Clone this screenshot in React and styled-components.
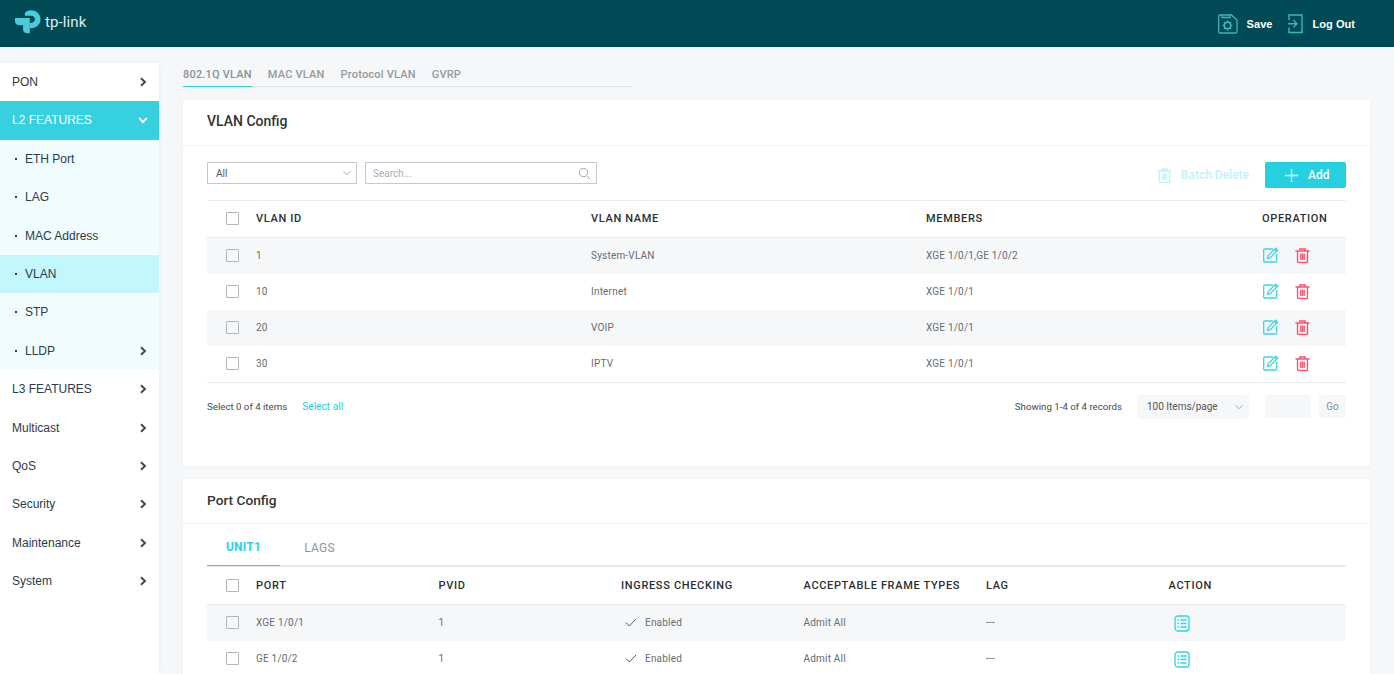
import React from "react";
import styled, { createGlobalStyle } from "styled-components";

const Global = createGlobalStyle`
  html, body { margin: 0; padding: 0; height: 100%; overflow: hidden; background: #f6f7f9; }
  #root { height: 674px; overflow: hidden; }
  * { box-sizing: border-box; }
`;
const ARIAL = `"Liberation Sans", Arial, sans-serif`;
const ROBOTO = `Roboto, "Liberation Sans", sans-serif`;

const Page = styled.div`display:flex;flex-direction:column;height:674px;overflow:hidden;background:#f6f7f9;font-family:${ROBOTO};`;
const TopBar = styled.header`height:47px;flex:none;background:#004a56;display:flex;align-items:center;justify-content:space-between;padding:0 39px 0 15px;`;
const Logo = styled.div`display:flex;align-items:center;gap:4px;margin-top:-3px;`;
const LogoText = styled.span`font:400 15px ${ROBOTO};color:#dcefF1;letter-spacing:.1px;margin-top:-1px;`;
const TopActions = styled.div`display:flex;align-items:center;`;
const TopAction = styled.div`display:flex;align-items:center;gap:9px;margin-left:${p=>p.$ml||0}px;font:700 11px ${ARIAL};letter-spacing:.05px;color:#fff;`;
const Body = styled.div`display:flex;flex:1;min-height:0;padding-top:16px;`;
const Side = styled.nav`width:159px;flex:none;background:#fff;margin-top:-.1px;box-shadow:0 0 6px rgba(0,0,0,.04);`;
const NavRow = styled.div`height:38.4px;display:flex;align-items:center;justify-content:space-between;padding:0 12px;font:400 12px ${ARIAL};color:#2c3a4a;background:${p=>p.$bg||"transparent"};${p=>p.$active&&"color:#fff;"}`;
const SubList = styled.div`background:#f1fcfe;`;
const SubLabel = styled.span`display:flex;align-items:center;gap:8px;`;
const Dot = styled.i`width:2px;height:2px;background:#2c3a4a;display:block;margin-left:3px;`;
const Main = styled.main`flex:1;min-width:0;padding:0 24px;`;
const TopTabs = styled.div`display:flex;width:450px;height:24px;border-bottom:1px solid #e3e5e8;gap:16px;`;
const TopTab = styled.div`height:24px;font:500 11px ${ROBOTO};letter-spacing:.2px;line-height:24px;color:${p=>p.$on?"#8a9299":"#949aa0"};${p=>p.$on&&"border-bottom:1px solid #32cfdf;"}`;
const Card = styled.section`background:#fff;margin-top:${p=>p.$mt}px;height:${p=>p.$h||"auto"};box-shadow:0 1px 3px rgba(0,0,0,.03);padding:0 24px;`;
const CardHead = styled.div`height:${p=>p.$h||46}px;margin:0 -24px;padding:0 24px 3px;border-bottom:1px solid #f2f3f4;display:flex;align-items:center;font:500 ${p=>p.$fs||14}px ${ROBOTO};color:#333;`;
const Toolbar = styled.div`display:flex;align-items:flex-start;padding-top:16px;height:54px;gap:8px;`;
const Select = styled.div`width:150px;height:22px;border:1px solid #c6c8ca;display:flex;align-items:center;justify-content:space-between;padding:0 2px 0 8px;font:400 10px ${ROBOTO};color:#555;`;
const Search = styled.div`width:232px;height:22px;border:1px solid #c6c8ca;display:flex;align-items:center;justify-content:space-between;padding:0 5px 0 7px;font:400 10px ${ROBOTO};color:#a9adb1;`;
const Spacer = styled.div`flex:1;`;
const Batch = styled.div`display:flex;align-items:center;gap:9px;height:26px;margin-right:8px;font:500 12px ${ROBOTO};color:#c3f1f6;`;
const AddBtn = styled.div`width:81px;height:26px;background:#25d0e1;border-radius:2px;display:flex;align-items:center;padding-left:20px;gap:10px;font:500 12px ${ROBOTO};color:#fff;`;
const Row = styled.div`display:grid;grid-template-columns:${p=>p.$cols};align-items:center;height:${p=>p.$h||36}px;padding-bottom:${p=>p.$pb??2}px;background:${p=>p.$alt?"#f6f7f9":"#fff"};font:400 10px ${ROBOTO};color:#666c72;letter-spacing:.2px;`;
const HeadRow = styled(Row)`font:500 11px ${ROBOTO};color:#2b2f33;letter-spacing:.66px;border-top:${p=>p.$top?"1px solid #eceef0":"0"};border-bottom:1px solid #e8eaec;`;
const Box = styled.span`width:13px;height:13px;border:1px solid #b3b6b9;border-radius:1px;background:#fff;margin-left:19px;display:block;${p=>p.$alt&&"background:#f6f7f9;"}`;
const Ops = styled.div`display:flex;align-items:center;gap:16px;padding-left:${p=>p.$pl||1}px;padding-top:${p=>p.$pt||0}px;`;
const Footer = styled.div`border-top:1px solid #e8eaec;height:48px;display:flex;align-items:center;font:400 9.7px ${ROBOTO};color:#444a50;`;
const Link = styled.span`color:#25cfe0;margin-left:15px;font-size:10.2px;`;
const PageSel = styled.div`width:112px;height:24px;background:#f6f7f9;border-radius:2px;margin-left:15px;padding:0 3px 0 10px;display:flex;align-items:center;justify-content:space-between;font:400 10px ${ROBOTO};color:#555;`;
const GoInput = styled.div`width:46px;height:23px;background:#f6f7f9;border-radius:2px;margin-left:16px;`;
const GoBtn = styled.div`width:27px;height:23px;background:#f6f7f9;border-radius:2px;margin-left:8px;display:flex;align-items:center;justify-content:center;font:400 10px ${ROBOTO};color:#8b9096;`;
const UnitTabs = styled.div`display:flex;height:43px;border-bottom:2px solid #e8e9eb;`;
const UnitTab = styled.div`width:${p=>p.$w}px;height:42px;display:flex;align-items:center;justify-content:center;padding-top:5px;font:${p=>p.$on?"700":"400"} 12px ${ROBOTO};letter-spacing:.2px;color:${p=>p.$on?"#32cfdf":"#8f9499"};${p=>p.$on&&"border-bottom:1px solid #32cfdf;"}`;
const Enabled = styled.span`display:flex;align-items:center;gap:8px;padding-left:4px;`;
const Col = styled.span`display:block;`;

const Chevron = ({dir="right",color="#3c4650"}) => (
  <svg width="10" height="10" viewBox="0 0 10 10" fill="none" style={{marginRight:-1}}>
    <path d={dir==="right"?"M3 1.200 7 5 3 8.800":"M1.200 3 5 7l3.800-4"} stroke={color} strokeWidth="1.900"/>
  </svg>
);
const Thin = () => <svg width="14" height="8" viewBox="0 0 14 8" fill="none"><path d="M3.500 2.200 7 5.800l3.500-3.600" stroke="#a8abae"/></svg>;
const TpLogo = () => (
  <svg width="26" height="26" viewBox="0 0 29 27">
    <path d="M11 3.500C12.500 1.500 15 .5 18 .5c6 0 10.500 4.500 10.500 10s-4.500 10-10.500 10h-1.500v-6H18c2.300 0 4.200-1.800 4.200-4s-1.900-4-4.200-4h-7z" fill="#4acbd6"/>
    <path d="M9 9h7.500v17H13c-2 0-4-1.500-4-4v-5H4c-2 0-4-2-4-4V9z" fill="#4acbd6"/>
  </svg>
);
const SaveIcon = () => (
  <svg width="20" height="20" viewBox="0 0 20 20" fill="none" stroke="#3fb3c0" strokeWidth="1.300">
    <path d="M1.700 1h11.800l5.500 5v11.500a1.500 1.500 0 0 1-1.500 1.500H2.200A1.500 1.500 0 0 1 .7 17.500V2A1 1 0 0 1 1.700 1z"/>
    <path d="M4 1v2.500h8V1"/>
    <circle cx="9.500" cy="11.500" r="3.200" strokeWidth="1.500"/>
    <path d="M9.500 6.500v1.800M9.500 14.700v1.800M4.500 11.500h1.800M12.700 11.500h1.800M6 8l1.200 1.200M11.800 13.800 13 15M13 8l-1.200 1.200M7.200 13.800 6 15" strokeWidth="1.500"/>
  </svg>
);
const LogoutIcon = () => (
  <svg width="15" height="20" viewBox="0 0 15 20" fill="none" stroke="#3fb3c0" strokeWidth="1.400">
    <path d="M1 6V1h13v17.500H1v-5"/>
    <path d="M0 9.700h8.500M5.500 6.200 9 9.700l-3.500 3.500"/>
  </svg>
);
const SearchIcon = () => <svg width="13" height="13" viewBox="0 0 13 13" fill="none" stroke="#a4a8ac"><circle cx="5.500" cy="5.500" r="4.200"/><path d="m8.700 8.700 3.300 3.300"/></svg>;
const Trash = ({color,size=15}) => (
  <svg width={size} height={size} viewBox="0 0 15 15" fill="none" stroke={color} strokeWidth="1.300">
    <path d="M.5 3h14M4.800 3V1h5.400v2M2.500 3v10.500a1 1 0 0 0 1 1h8a1 1 0 0 0 1-1V3M5.800 5.500v6.500M7.500 5.500v6.500M9.200 5.500v6.500"/>
  </svg>
);
const Edit = () => (
  <svg width="16" height="16" viewBox="0 0 16 16" fill="none" stroke="#3fd3e3" strokeWidth="1.300">
    <path d="M10 2H1.700a1 1 0 0 0-1 1v11a1 1 0 0 0 1 1h11a1 1 0 0 0 1-1V7"/>
    <path d="M4.500 11.500 5.200 8.600 12.600 1.200l2 2-7.400 7.400z" />
    <path d="M11.500 2.300l2 2" />
  </svg>
);
const ListIcon = () => (
  <svg width="16" height="17" viewBox="0 0 16 17" fill="none" stroke="#35d0e2" strokeWidth="1.300">
    <rect x="1" y="1" width="14" height="15" rx="3"/>
    <path d="M3.500 5h1.500M6.500 5h6M3.500 8.500h1.500M6.500 8.500h6M3.500 12h1.500M6.500 12h6"/>
  </svg>
);
const Plus = () => <svg width="13" height="13" viewBox="0 0 13 13" stroke="#fff" strokeWidth="1.300"><path d="M6.500 0v13M0 6.500h13"/></svg>;
const Check = () => <svg width="12" height="9" viewBox="0 0 12 9" fill="none" stroke="#555c63"><path d="M1 4.500 4.300 8 11 1"/></svg>;

const vlanCols = "49px 335px 335px 336px 1fr";
const portCols = "49px 182.500px 182.500px 182.500px 182.500px 182.500px 1fr";
const vlans = [["1","System-VLAN","XGE 1/0/1,GE 1/0/2"],["10","Internet","XGE 1/0/1"],["20","VOIP","XGE 1/0/1"],["30","IPTV","XGE 1/0/1"]];
const ports = ["XGE 1/0/1","GE 1/0/2"];

export default function App() {
  return (
    <Page>
      <Global />
      <TopBar>
        <Logo><TpLogo /><LogoText>tp-link</LogoText></Logo>
        <TopActions>
          <TopAction><SaveIcon />Save</TopAction>
          <TopAction $ml={16}><LogoutIcon />Log Out</TopAction>
        </TopActions>
      </TopBar>
      <Body>
        <Side>
          <NavRow>PON<Chevron /></NavRow>
          <NavRow $active $bg="#36d0df">L2 FEATURES<Chevron dir="down" color="#fff" /></NavRow>
          <SubList>
            <NavRow><SubLabel><Dot />ETH Port</SubLabel></NavRow>
            <NavRow><SubLabel><Dot />LAG</SubLabel></NavRow>
            <NavRow><SubLabel><Dot />MAC Address</SubLabel></NavRow>
            <NavRow $bg="#c1f7fd"><SubLabel><Dot />VLAN</SubLabel></NavRow>
            <NavRow><SubLabel><Dot />STP</SubLabel></NavRow>
            <NavRow><SubLabel><Dot />LLDP</SubLabel><Chevron /></NavRow>
          </SubList>
          {["L3 FEATURES","Multicast","QoS","Security","Maintenance","System"].map(t => (
            <NavRow key={t}>{t}<Chevron /></NavRow>
          ))}
        </Side>
        <Main>
          <TopTabs>
            <TopTab $on>802.1Q VLAN</TopTab>
            <TopTab>MAC VLAN</TopTab>
            <TopTab>Protocol VLAN</TopTab>
            <TopTab>GVRP</TopTab>
          </TopTabs>
          <Card $mt={13} $h="366px">
            <CardHead>VLAN Config</CardHead>
            <Toolbar>
              <Select>All<Thin /></Select>
              <Search>Search...<SearchIcon /></Search>
              <Spacer />
              <Batch><Trash color="#c3f1f6" />Batch Delete</Batch>
              <AddBtn><Plus />Add</AddBtn>
            </Toolbar>
            <HeadRow $cols={vlanCols} $h={38} $top>
              <Box /><Col>VLAN ID</Col><Col>VLAN NAME</Col><Col>MEMBERS</Col><Col>OPERATION</Col>
            </HeadRow>
            {vlans.map((v,i) => (
              <Row key={v[0]} $cols={vlanCols} $alt={i%2===0}>
                <Box $alt={i%2===0} /><Col>{v[0]}</Col><Col>{v[1]}</Col><Col>{v[2]}</Col>
                <Ops><Edit /><Trash color="#ff4d6a" /></Ops>
              </Row>
            ))}
            <Footer>
              Select 0 of 4 items<Link>Select all</Link>
              <Spacer />
              Showing 1-4 of 4 records
              <PageSel>100 Items/page<Thin /></PageSel>
              <GoInput />
              <GoBtn>Go</GoBtn>
            </Footer>
          </Card>
          <Card $mt={13}>
            <CardHead $h={45} $fs={13.700}>Port Config</CardHead>
            <UnitTabs>
              <UnitTab $on $w={73}>UNIT1</UnitTab>
              <UnitTab $w={79}>LAGS</UnitTab>
            </UnitTabs>
            <HeadRow $cols={portCols} $h={38} $pb={0}>
              <Box /><Col>PORT</Col><Col>PVID</Col><Col>INGRESS CHECKING</Col><Col>ACCEPTABLE FRAME TYPES</Col><Col>LAG</Col><Col>ACTION</Col>
            </HeadRow>
            {ports.map((p,i) => (
              <Row key={p} $cols={portCols} $alt={i===0}>
                <Box $alt={i===0} /><Col>{p}</Col><Col>1</Col>
                <Enabled><Check />Enabled</Enabled>
                <Col>Admit All</Col><Col>---</Col>
                <Ops $pl={5} $pt={2}><ListIcon /></Ops>
              </Row>
            ))}
          </Card>
        </Main>
      </Body>
    </Page>
  );
}
